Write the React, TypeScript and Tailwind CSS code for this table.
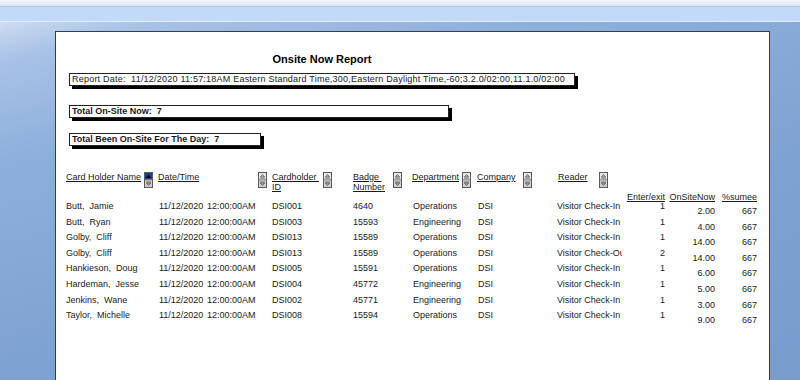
import React from "react";

const font = { fontFamily: '"Liberation Sans", Arial, sans-serif' };

function SortBtn({ active = false }: { active?: boolean }) {
  return (
    <svg width="9" height="16" viewBox="0 0 9 16" className="block shrink-0">
      <rect x="0.5" y="0.5" width="8" height="15" fill="#e4e4e4" stroke="#5a5a5a" />
      <rect x="1" y="1" width="7" height="6.5" fill={active ? "#1c3f82" : "#e8e8e8"} />
      <line x1="0.5" y1="8" x2="8.5" y2="8" stroke="#5a5a5a" />
      <rect x="1" y="8.5" width="7" height="6.5" fill="#cfcfcf" />
      {active ? (
        <polygon points="2,6 4.5,2.5 7,6" fill="#000" />
      ) : (
        <>
          <polygon points="2.5,5 4.5,2.5 6.5,5" fill="none" stroke="#444" strokeWidth="0.8" />
          <line x1="2" y1="6.2" x2="7" y2="6.2" stroke="#666" strokeWidth="0.8" />
        </>
      )}
      <line x1="2" y1="10" x2="7" y2="10" stroke="#666" strokeWidth="0.8" />
      <polygon points="2.5,11 4.5,13.5 6.5,11" fill="none" stroke="#444" strokeWidth="0.8" />
    </svg>
  );
}

const rows = [
  ["Butt,  Jamie", "DSI001", "4640", "Operations", "Visitor Check-In", "1", "2.00"],
  ["Butt,  Ryan", "DSI003", "15593", "Engineering", "Visitor Check-In", "1", "4.00"],
  ["Golby,  Cliff", "DSI013", "15589", "Operations", "Visitor Check-In", "1", "14.00"],
  ["Golby,  Cliff", "DSI013", "15589", "Operations", "Visitor Check-Out", "2", "14.00"],
  ["Hankieson,  Doug", "DSI005", "15591", "Operations", "Visitor Check-In", "1", "6.00"],
  ["Hardeman,  Jesse", "DSI004", "45772", "Engineering", "Visitor Check-In", "1", "5.00"],
  ["Jenkins,  Wane", "DSI002", "45771", "Engineering", "Visitor Check-In", "1", "3.00"],
  ["Taylor,  Michelle", "DSI008", "15594", "Operations", "Visitor Check-In", "1", "9.00"],
];

export default function App() {
  return (
    <div
      className="w-[800px] h-[380px] overflow-hidden flex flex-col bg-[#7b9fcf] text-[#1a1a1a]"
      style={font}
    >
      <div className="shrink-0 h-[6px] bg-[linear-gradient(#eef4fc,#dde8f7)]" />
      <div className="shrink-0 h-[1px] bg-[#bcc6d3]" />
      <div className="shrink-0 h-[14px] bg-[#c1dafa]" />
      <div className="shrink-0 h-[1px] bg-[#e4eefc]" />
      <div className="flex-1 min-h-0 overflow-hidden pl-[55px] pt-[9px] bg-[linear-gradient(165deg,#cddcf0_0%,#a8c2e6_7%,#8dafdc_25%,#7ea2d1_60%,#789ccd_100%)]">
        <div className="w-[715px] h-[400px] bg-white border border-[#3c3c48] pl-[10px] pt-[20px] text-[9px] leading-[11px]">
          {/* title */}
          <div className="w-[512px] text-center font-bold text-[11px] leading-[14px] text-black">
            Onsite Now Report
          </div>
          {/* box 1 */}
          <div className="mt-[7px] ml-[3px] w-[506px] h-[13px] border border-[#222] shadow-[3px_3px_0_#000] pl-[2px] leading-[11px] whitespace-pre overflow-hidden tracking-[0.22px]">
            Report Date:  11/12/2020 11:57:18AM Eastern Standard Time,300,Eastern Daylight Time,-60;3.2.0/02:00,11.1.0/02:00
          </div>
          {/* box 2 */}
          <div className="mt-[19px] ml-[3px] w-[380px] h-[13px] border border-[#222] shadow-[3px_3px_0_#000] pl-[2px] font-bold leading-[11px] whitespace-pre">
            Total On-Site Now:  7
          </div>
          {/* box 3 */}
          <div className="mt-[15px] ml-[3px] w-[192px] h-[13px] border border-[#222] shadow-[3px_3px_0_#000] pl-[2px] font-bold leading-[11px] whitespace-pre">
            Total Been On-Site For The Day:  7
          </div>
          {/* header */}
          <div className="mt-[26px] flex items-start h-[16px] underline-offset-[1px]">
            <div className="w-[78px] underline whitespace-nowrap">Card Holder Name</div>
            <SortBtn active />
            <div className="ml-[5px] w-[100px] underline">Date/Time</div>
            <SortBtn />
            <div className="ml-[5px] w-[51px] leading-[10px]">
              <div className="underline whitespace-pre">Cardholder </div>
              <div className="underline">ID</div>
            </div>
            <SortBtn />
            <div className="ml-[21px] w-[40px] leading-[10px]">
              <div className="underline whitespace-pre">Badge </div>
              <div className="underline">Number</div>
            </div>
            <SortBtn />
            <div className="ml-[10px] w-[50px] underline">Department</div>
            <SortBtn />
            <div className="ml-[6px] w-[46px] underline">Company</div>
            <SortBtn />
            <div className="ml-[26px] w-[41px] underline">Reader</div>
            <SortBtn />
          </div>
          <div className="mt-[4px] flex h-[10px] leading-[10px]">
            <div className="ml-[556px] w-[43px] text-right underline">Enter/exit</div>
            <div className="w-[50px] text-right underline">OnSiteNow</div>
            <div className="w-[42px] text-right underline">%sumee</div>
          </div>
          <div className="mt-[-3px] flex flex-col">
            {rows.map((r, i) => (
              <div key={i} className="flex h-[15.6px] leading-[15.6px] whitespace-pre">
                <div className="w-[93px]">{r[0]}</div>
                <div className="w-[48px]">11/12/2020</div>
                <div className="w-[65px]">12:00:00AM</div>
                <div className="w-[81px]">{r[1]}</div>
                <div className="w-[60px]">{r[2]}</div>
                <div className="w-[65px]">{r[3]}</div>
                <div className="w-[79px]">DSI</div>
                <div className="w-[65px] overflow-hidden">{r[4]}</div>
                <div className="w-[43px] text-right">{r[5]}</div>
                <div className="w-[50px] text-right mt-[5px]">{r[6]}</div>
                <div className="w-[42px] text-right mt-[5px]">667</div>
              </div>
            ))}
          </div>
        </div>
      </div>
    </div>
  );
}
